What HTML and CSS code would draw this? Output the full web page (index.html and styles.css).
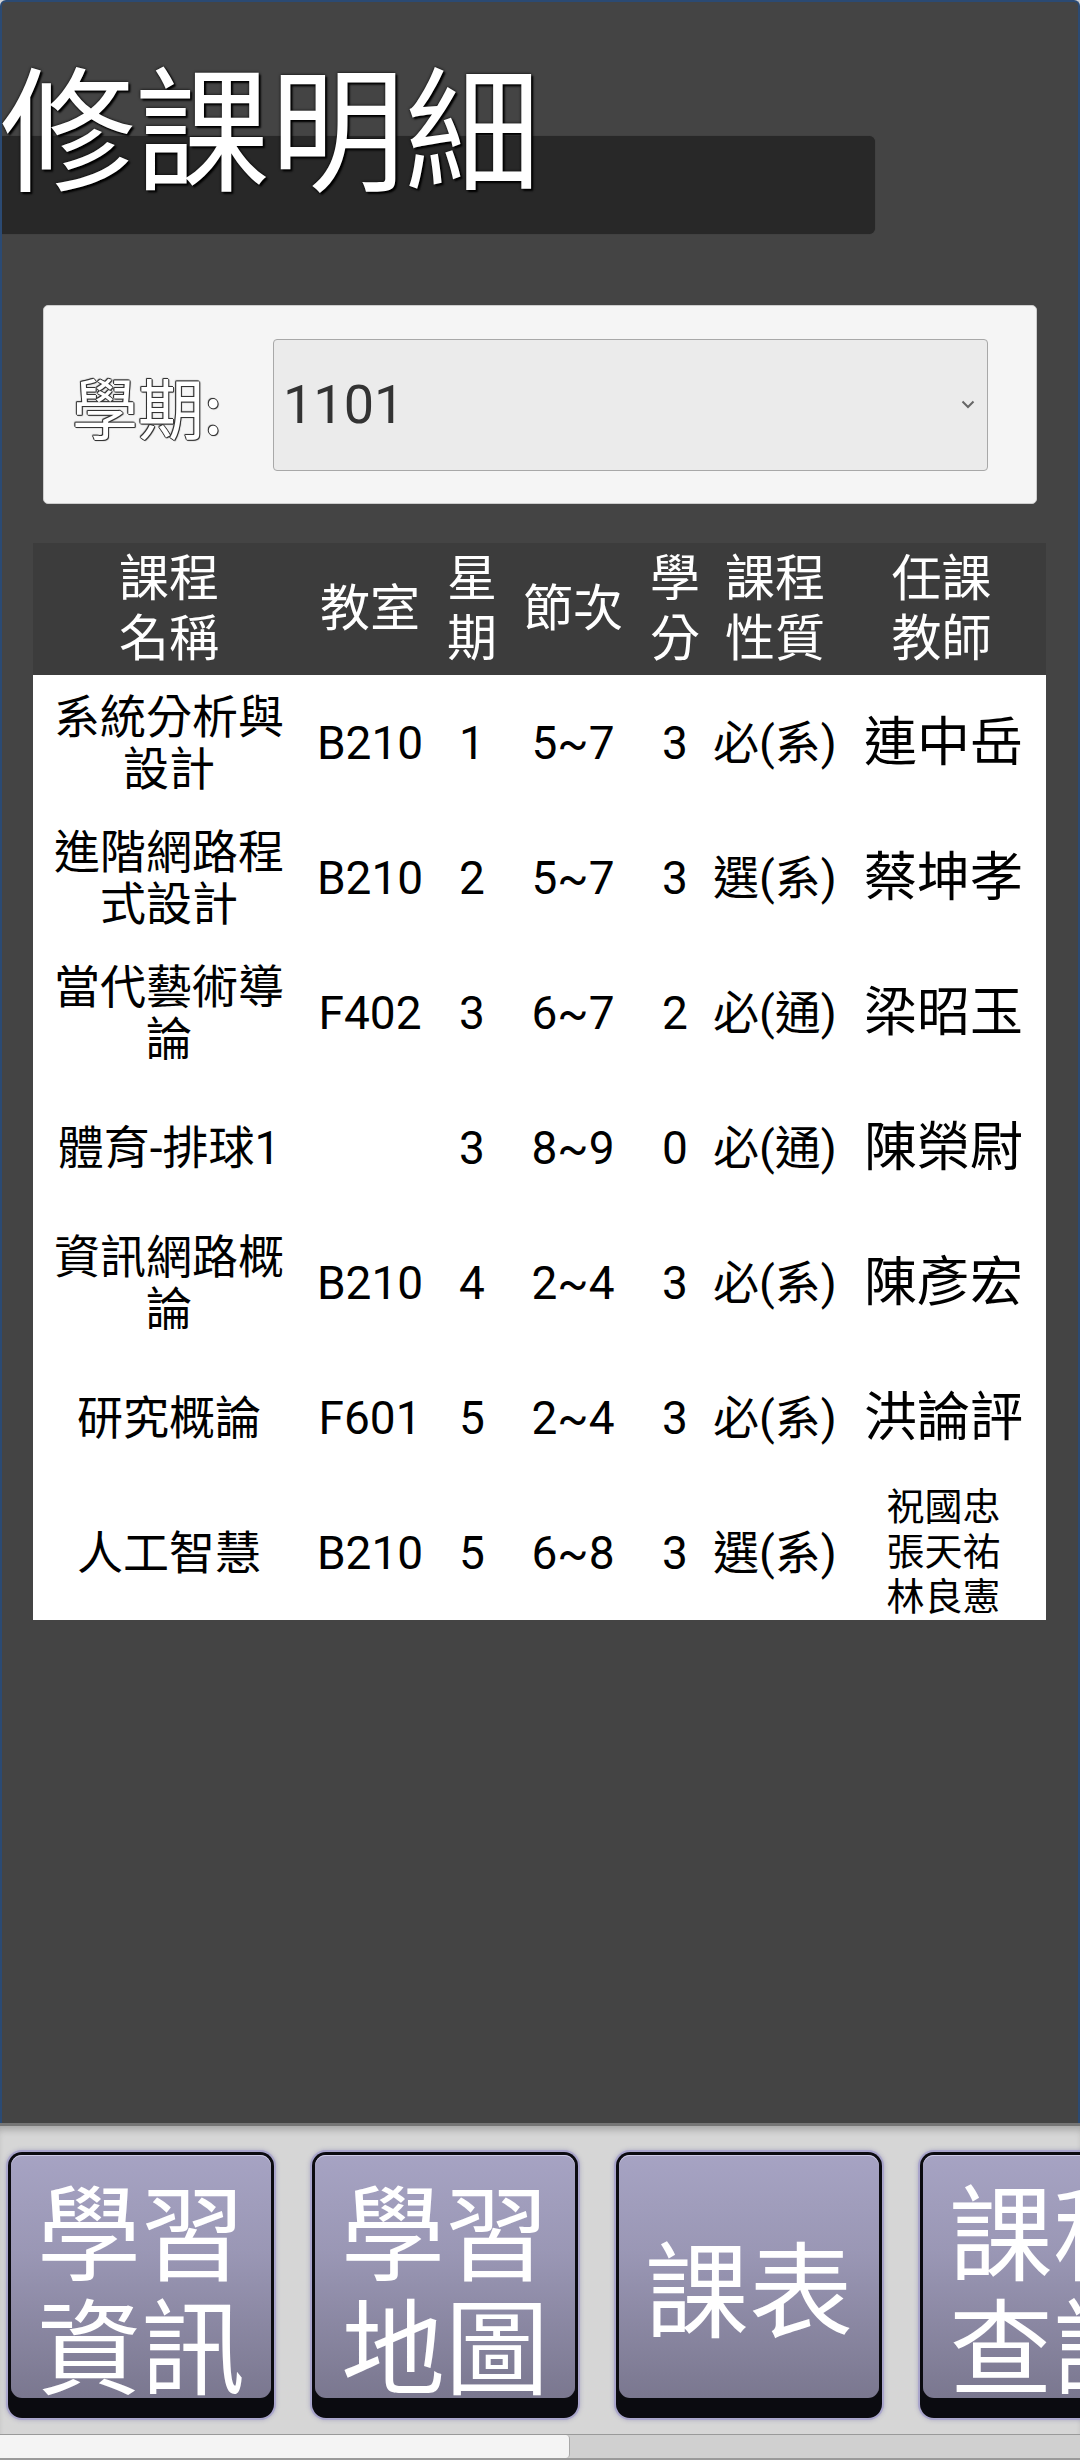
FILE: index.html
```html
<!DOCTYPE html>
<html lang="zh-Hant">
<head>
<meta charset="utf-8">
<title>修課明細</title>
<link rel="stylesheet" href="styles.css">
</head>
<body>
<div class="frame">
  <div class="titlebar"><h1 class="title">修課明細</h1></div>

  <div class="panel">
    <span class="term-label">學期:</span>
    <div class="select">
      <span class="select-value">1101</span>
      <svg class="chevron" width="14" height="9" viewBox="0 0 14 9"><polyline points="1.5,1.5 7,7 12.5,1.5" fill="none" stroke="#666" stroke-width="2"/></svg>
    </div>
  </div>

  <table class="courses">
    <colgroup>
      <col class="c-name"><col class="c-room"><col class="c-day"><col class="c-period"><col class="c-credit"><col class="c-type"><col class="c-teacher">
    </colgroup>
    <thead>
      <tr>
        <th>課程<br>名稱</th>
        <th>教室</th>
        <th>星<br>期</th>
        <th>節次</th>
        <th>學<br>分</th>
        <th>課程<br>性質</th>
        <th>任課<br>教師</th>
      </tr>
    </thead>
    <tbody>
      <tr><td class="name">系統分析與設計</td><td>B210</td><td>1</td><td>5~7</td><td>3</td><td>必(系)</td><td class="teacher">連中岳</td></tr>
      <tr><td class="name">進階網路程式設計</td><td>B210</td><td>2</td><td>5~7</td><td>3</td><td>選(系)</td><td class="teacher">蔡坤孝</td></tr>
      <tr><td class="name">當代藝術導論</td><td>F402</td><td>3</td><td>6~7</td><td>2</td><td>必(通)</td><td class="teacher">梁昭玉</td></tr>
      <tr><td class="name">體育-排球1</td><td></td><td>3</td><td>8~9</td><td>0</td><td>必(通)</td><td class="teacher">陳榮尉</td></tr>
      <tr><td class="name">資訊網路概論</td><td>B210</td><td>4</td><td>2~4</td><td>3</td><td>必(系)</td><td class="teacher">陳彥宏</td></tr>
      <tr><td class="name">研究概論</td><td>F601</td><td>5</td><td>2~4</td><td>3</td><td>必(系)</td><td class="teacher">洪論評</td></tr>
      <tr><td class="name">人工智慧</td><td>B210</td><td>5</td><td>6~8</td><td>3</td><td>選(系)</td><td class="teacher multi">祝國忠<br>張天祐<br>林良憲</td></tr>
    </tbody>
  </table>
</div>

<nav class="nav">
  <div class="buttons">
    <div class="btn"><div class="face">學習<br>資訊</div></div>
    <div class="btn"><div class="face">學習<br>地圖</div></div>
    <div class="btn"><div class="face">課表</div></div>
    <div class="btn"><div class="face">課程<br>查詢</div></div>
  </div>
  <div class="scrollbar"><div class="thumb"></div></div>
</nav>
</body>
</html>
```
FILE: styles.css
```css
html, body {
  margin: 0;
  padding: 0;
}
body {
  width: 1080px;
  height: 2460px;
  overflow: hidden;
  background: #d6d6d6;
  font-family: Roboto, "Noto Sans CJK TC", sans-serif;
}
.frame {
  height: 2123px;
  box-sizing: border-box;
  border: 2px solid #2b4a73;
  border-bottom: none;
  border-radius: 6px 6px 0 0;
  background: #444444;
  overflow: hidden;
  display: flex;
  flex-direction: column;
  align-items: flex-start;
}
.titlebar {
  display: flex;
  margin-top: 134px;
  width: 873px;
  height: 98px;
  background: #282828;
  border-radius: 0 6px 6px 0;
  box-shadow: 0 0 1px rgba(0,0,0,.4);
}
.title {
  margin: -63px 0 0 -2px;
  font-family: "Noto Sans CJK TC", sans-serif;
  font-weight: 400;
  font-size: 135px;
  line-height: 98px;
  height: 98px;
  color: #ffffff;
  white-space: nowrap;
  text-shadow: 0 0 3px #000, 2px 2px 2px #000;
}
.panel {
  margin: 71px 0 0 41px;
  width: 994px;
  height: 199px;
  box-sizing: border-box;
  border: 1px solid #cdcdcd;
  border-radius: 5px;
  background: #f5f5f5;
  display: flex;
  align-items: center;
  padding: 0 48px 0 28px;
}
.term-label {
  font-family: "Noto Sans CJK TC", Roboto, sans-serif;
  font-size: 66px;
  line-height: 80px;
  color: #ffffff;
  text-shadow: 1px 0 0 #333, -1px 0 0 #333, 0 1px 0 #333, 0 -1px 0 #333, 1px 1px 1px #333, -1px -1px 1px #333;
}
.select {
  margin-left: auto;
  width: 715px;
  height: 132px;
  box-sizing: border-box;
  border: 1px solid #a8a8a8;
  border-radius: 4px;
  background: #ebebeb;
  display: flex;
  align-items: center;
  padding: 0 12px 0 9px;
}
.select-value {
  font-size: 54px;
  color: #333333;
}
.chevron {
  margin-left: auto;
}
.courses {
  margin: 39px 0 0 31px;
  width: 1013px;
  border-collapse: collapse;
  border-spacing: 0;
  table-layout: fixed;
}
.c-name { width: 272px; }
.c-room { width: 130px; }
.c-day { width: 74px; }
.c-period { width: 128px; }
.c-credit { width: 76px; }
.c-type { width: 124px; }
.c-teacher { width: 209px; }
.courses thead tr {
  height: 132px;
  background: #3c3c3c;
}
.courses th {
  padding: 0;
  font-weight: 400;
  font-size: 50px;
  line-height: 60px;
  color: #ffffff;
  text-align: center;
  vertical-align: middle;
}
.courses tbody tr {
  height: 135px;
  background: #ffffff;
}
.courses td {
  padding: 0;
  font-size: 46px;
  line-height: 52px;
  color: #000000;
  text-align: center;
  vertical-align: middle;
}
.courses td.name {
  padding: 0 8px;
}
.courses td.teacher {
  font-size: 53px;
  line-height: 60px;
  padding-left: 4px;
}
.courses td.teacher.multi {
  font-size: 38px;
  line-height: 45px;
}
.nav {
  height: 337px;
  box-sizing: border-box;
  border-top: 3px solid #767676;
  background: #d6d6d6;
  box-shadow: inset 0 7px 7px -3px rgba(0,0,0,.22);
  overflow: hidden;
}
.buttons {
  display: flex;
  gap: 38px;
  margin: 26px 0 0 8px;
  height: 266px;
}
.btn {
  flex: 0 0 266px;
  height: 266px;
  box-sizing: border-box;
  border-radius: 14px;
  background: #0b0b10;
  padding: 3px 3px 20px;
  box-shadow: 0 0 0 2px #aaa6cc, 0 0 4px 2px rgba(120,115,170,.45);
}
.face {
  height: 100%;
  box-sizing: border-box;
  border-radius: 11px;
  background: linear-gradient(#a6a3c3, #9a97b5 40%, #7a778f);
  box-shadow: inset 0 1px 0 #cfcce8;
  display: flex;
  align-items: center;
  justify-content: center;
  padding-top: 16px;
  font-family: "Noto Sans CJK TC", sans-serif;
  font-size: 104px;
  line-height: 114px;
  color: #ffffff;
  text-align: center;
  white-space: nowrap;
}
.scrollbar {
  margin-top: 16px;
  height: 26px;
  box-sizing: border-box;
  border-top: 1px solid #9a9a9a;
  border-bottom: 2px solid #9a9a9a;
  background: #d0d0d0;
}
.thumb {
  width: 570px;
  height: 100%;
  box-sizing: border-box;
  background: #f4f4f4;
  border-right: 1px solid #a8a8a8;
  border-radius: 0 4px 4px 0;
}
```
